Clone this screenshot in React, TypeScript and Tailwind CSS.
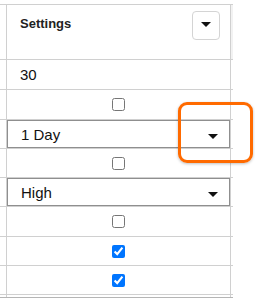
import type { ReactNode } from 'react'

const line = 'border-[#d0d0d0]'

function Caret({ className }: { className?: string }) {
  return (
    <svg width="10" height="5" viewBox="0 0 10 5" className={className}>
      <path d="M0 0 L10 0 L5 5 Z" fill="#111" />
    </svg>
  )
}

function Row({ h, children }: { h: string; children: ReactNode }) {
  return (
    <div className={`flex ${h} border-b ${line}`}>
      <div className={`w-[7px] shrink-0 border-r ${line}`} />
      <div className={`flex w-[224px] shrink-0 items-center border-r ${line}`}>{children}</div>
    </div>
  )
}

function Check({ checked }: { checked?: boolean }) {
  return (
    <div className="flex w-full justify-center">
      <input type="checkbox" defaultChecked={checked} className="m-0 h-[13px] w-[13px]" />
    </div>
  )
}

function SelectBox({ value }: { value: string }) {
  return (
    <div className="flex h-full w-full items-center justify-between border border-[#8f8f8f] pl-[13px] pr-[11px]">
      <span className="text-[15px] leading-[17px] text-[#111]">{value}</span>
      <Caret className="mt-[5px]" />
    </div>
  )
}

export default function App() {
  return (
    <div className="relative h-[300px] w-[255px] overflow-hidden bg-white font-['Liberation_Sans',Arial,sans-serif]">
      <div className="w-[233px] pt-[4px]">
        <div className={`flex h-[56px] border-y ${line}`}>
          <div className={`w-[7px] shrink-0 border-r ${line}`} />
          <div className={`flex w-[224px] shrink-0 items-start justify-between border-r ${line}`}>
            <span className="pl-[13px] pt-[11px] text-[13px] font-bold leading-[16px] text-[#222]">
              Settings
            </span>
            <button
              type="button"
              className="mr-[10px] mt-[6px] flex h-[29px] w-[28px] items-center justify-center rounded-[4px] border border-[#d4d4d4] bg-white"
            >
              <Caret className="-mt-[2px]" />
            </button>
          </div>
          <div className="w-[2px] bg-[#f2f2f2]" />
        </div>

        <Row h="h-[30px]">
          <span className="pl-[13px] text-[15px] leading-[17px] text-[#111]">30</span>
        </Row>
        <Row h="h-[30px]">
          <Check />
        </Row>
        <Row h="h-[29px]">
          <SelectBox value="1 Day" />
        </Row>
        <Row h="h-[29px]">
          <Check />
        </Row>
        <Row h="h-[29px]">
          <SelectBox value="High" />
        </Row>
        <Row h="h-[30px]">
          <Check />
        </Row>
        <Row h="h-[29px]">
          <Check checked />
        </Row>
        <Row h="h-[29px]">
          <Check checked />
        </Row>
        <div className="flex h-[3px] border-b border-[#b5b5b5]">
          <div className={`w-[7px] shrink-0 border-r ${line}`} />
          <div className={`w-[224px] shrink-0 border-r ${line}`} />
        </div>
      </div>

      <div className="absolute left-[178px] top-[102px] h-[61px] w-[75px] rounded-[9px] border-[3px] border-[#ff6a00] shadow-[0_1px_3px_rgba(0,0,0,0.25)]" />
    </div>
  )
}
